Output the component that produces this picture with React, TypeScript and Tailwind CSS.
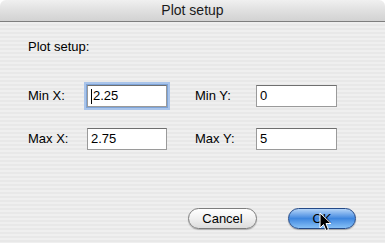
import React from "react";

const font = { fontFamily: '"Liberation Sans", Arial, sans-serif' };

const Field = ({ value, focused }: { value: string; focused?: boolean }) => (
  <div
    className={
      "h-[22px] bg-white border border-[#9a9a9a] border-t-[#6f6f6f] flex items-center pl-[3px] text-[13px] text-black " +
      (focused ? "shadow-[0_0_0_1px_#7ea4d8,0_0_0_3px_#a9c4ea]" : "")
    }
  >
    {focused && <span className="w-px h-[15px] bg-black mr-px" />}
    <span>{value}</span>
  </div>
);

export default function App() {
  return (
    <div className="w-[385px] h-[243px] bg-white overflow-hidden" style={font}>
      <div className="relative w-full h-full rounded-t-[6px] overflow-hidden flex flex-col">
        {/* title bar */}
        <div className="h-[22px] shrink-0 bg-gradient-to-b from-[#f0f0f0] via-[#e0e0e0] to-[#d2d2d2] border-b border-[#7e7e7e] flex items-center justify-center text-[14px] text-[#1a1a1a]">
          Plot setup
        </div>

        {/* body */}
        <div className="flex-1 bg-[repeating-linear-gradient(to_bottom,#efefef_0px,#efefef_2px,#e8e8e8_2px,#e8e8e8_4px)] pl-[28px] pt-[17px] text-[13px] text-black">
          <div className="h-[16px] leading-[16px]">Plot setup:</div>

          <div className="flex items-center mt-[30px]">
            <div className="w-[59px]">Min X:</div>
            <div className="w-[80px]">
              <Field value="2.25" focused />
            </div>
            <div className="w-[61px] ml-[28px]">Min Y:</div>
            <div className="w-[81px]">
              <Field value="0" />
            </div>
          </div>

          <div className="flex items-center mt-[21px]">
            <div className="w-[59px]">Max X:</div>
            <div className="w-[80px]">
              <Field value="2.75" />
            </div>
            <div className="w-[61px] ml-[28px]">Max Y:</div>
            <div className="w-[81px]">
              <Field value="5" />
            </div>
          </div>

          <div className="flex justify-end gap-[31px] pr-[29px] mt-[58px]">
            <button className="w-[69px] h-[21px] rounded-full border border-[#7d7d7d] bg-gradient-to-b from-[#ffffff] via-[#f0f0f0] to-[#dcdcdc] shadow-[0_1px_1px_rgba(0,0,0,0.25)] text-[13px] text-black leading-none">
              Cancel
            </button>
            <button className="w-[68px] h-[21px] rounded-full border border-[#244a88] bg-gradient-to-b from-[#b4d4f7] via-[#3f87df] to-[#86c0f6] shadow-[0_1px_1px_rgba(0,0,0,0.3)] text-[13px] text-black leading-none">
              OK
            </button>
          </div>
        </div>

        {/* mouse cursor */}
        <svg
          className="absolute left-[319px] top-[212px]"
          width="13"
          height="20"
          viewBox="0 0 13 20"
        >
          <path
            d="M1 1 L1 16 L4.5 12.5 L7 18.5 L9.5 17.5 L7 11.5 L12 11.5 Z"
            fill="#000"
            stroke="#fff"
            strokeWidth="1"
          />
        </svg>
      </div>
    </div>
  );
}
